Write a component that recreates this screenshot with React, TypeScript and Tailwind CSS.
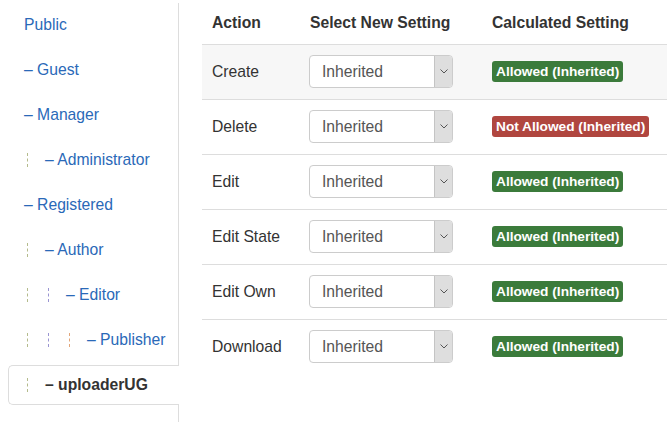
import React from 'react';

const groups = [
    { name: 'Public', level: -1 },
    { name: 'Guest', level: 0 },
    { name: 'Manager', level: 0 },
    { name: 'Administrator', level: 1 },
    { name: 'Registered', level: 0 },
    { name: 'Author', level: 1 },
    { name: 'Editor', level: 2 },
    { name: 'Publisher', level: 3 },
    { name: 'uploaderUG', level: 1, active: true },
];

const markColors = ['border-[#b4bb8c]', 'border-[#9a95d2]', 'border-[#e2a67a]'];

const actions = [
    { name: 'Create', allowed: true },
    { name: 'Delete', allowed: false },
    { name: 'Edit', allowed: true },
    { name: 'Edit State', allowed: true },
    { name: 'Edit Own', allowed: true },
    { name: 'Download', allowed: true },
];

function LevelMarks({ level }: { level: number }) {
    const marks = [];
    for (let i = 0; i < level; i++) {
        marks.push(
            <span key={i} className="inline-flex w-[21px] shrink-0">
                <span className={`ml-[3px] h-[14px] border-l border-dashed ${markColors[i]}`} />
            </span>
        );
    }
    return <>{marks}</>;
}

function GroupTab({ name, level, active }: { name: string; level: number; active?: boolean }) {
    return (
        <div
            className={`h-[40px] flex items-center text-[15.7px] ${active
                ? 'relative -mr-px ml-[8px] pl-[15px] bg-white border border-r-0 border-[#ddd] rounded-l-[5px] font-bold text-[#333]'
                : 'pl-[24px] text-[#2a69b8]'
                }`}
        >
            <LevelMarks level={level} />
            <span className="whitespace-nowrap">{level >= 0 ? '– ' : ''}{name}</span>
        </div>
    );
}

function FakeSelect() {
    return (
        <div className="w-[144px] h-[33px] border border-[#ccc] rounded-[4px] flex overflow-hidden bg-white">
            <div className="flex-1 flex items-center pl-[12px] text-[15.7px] text-[#555]">Inherited</div>
            <div className="w-[18px] bg-[#dedede] border-l border-[#c4c4c4] flex items-center justify-center">
                <svg width="8" height="5" viewBox="0 0 8 5" fill="none">
                    <path d="M0.5 0.5 L4 4 L7.5 0.5" stroke="#555" strokeWidth="1" />
                </svg>
            </div>
        </div>
    );
}

function Badge({ allowed }: { allowed: boolean }) {
    return (
        <span
            className={`inline-block px-[4px] pt-[2px] pb-[2px] leading-[17px] rounded-[3px] text-white text-[13.7px] font-bold whitespace-nowrap -translate-y-px ${allowed ? 'bg-[#3b7b3b]' : 'bg-[#b0463f]'}`}
        >
            {allowed ? 'Allowed (Inherited)' : 'Not Allowed (Inherited)'}
        </span>
    );
}

export default function App() {
    return (
        <div className="w-[667px] h-[422px] overflow-hidden bg-white flex" style={{ fontFamily: '"Liberation Sans", Arial, sans-serif' }}>
            <div className="w-[179px] shrink-0 mt-[3px] pt-[2px] border-r border-[#ddd] flex flex-col gap-[5px]">
                {groups.map(g => (
                    <GroupTab key={g.name} name={g.name} level={g.level} active={g.active} />
                ))}
            </div>

            <div className="flex-1 ml-[23px]">
                <table className="w-[480px] border-collapse text-[15.7px] text-[#333]">
                    <thead>
                        <tr className="h-[44px]">
                            <th className="w-[98px] text-left font-bold px-[10px] pt-[3px]">Action</th>
                            <th className="w-[182px] text-left font-bold px-[10px] pt-[3px] whitespace-nowrap">Select New Setting</th>
                            <th className="text-left font-bold px-[10px] pt-[3px] whitespace-nowrap">Calculated Setting</th>
                        </tr>
                    </thead>
                    <tbody>
                        {actions.map((a, i) => (
                            <tr key={a.name} className={`h-[55px] border-t border-[#ddd] ${i === 0 ? 'bg-[#f7f7f7]' : ''}`}>
                                <td className="px-[10px] whitespace-nowrap">{a.name}</td>
                                <td className="px-[9px]"><FakeSelect /></td>
                                <td className="px-[10px]"><Badge allowed={a.allowed} /></td>
                            </tr>
                        ))}
                    </tbody>
                </table>
            </div>
        </div>
    );
}
